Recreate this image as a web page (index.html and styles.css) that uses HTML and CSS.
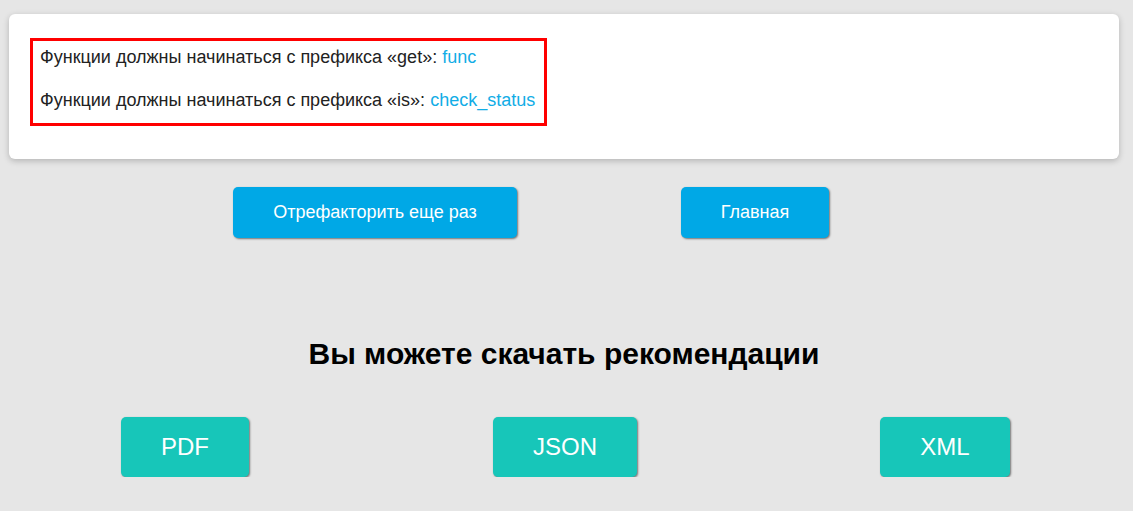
FILE: index.html
```html
<!DOCTYPE html>
<html lang="ru">
<head>
<meta charset="utf-8">
<title>Рекомендации</title>
<link rel="stylesheet" href="styles.css">
</head>
<body>
<div class="container">
  <div class="card">
    <div class="result">
      <p class="rule">Функции должны начинаться с префикса «get»: <a class="fn" href="#">func</a></p>
      <p class="rule">Функции должны начинаться с префикса «is»: <a class="fn" href="#">check_status</a></p>
    </div>
  </div>
  <div class="actions">
    <a class="btn btn-blue act-1" href="#">Отрефакторить еще раз</a>
    <a class="btn btn-blue act-2" href="#">Главная</a>
  </div>
  <h2 class="title">Вы можете скачать рекомендации</h2>
  <div class="downloads">
    <div class="dl-col"><a class="btn btn-teal" href="#">PDF</a></div>
    <div class="dl-col"><a class="btn btn-teal" href="#">JSON</a></div>
    <div class="dl-col"><a class="btn btn-teal" href="#">XML</a></div>
  </div>
</div>
</body>
</html>
```
FILE: styles.css
```css
html, body {
  margin: 0;
  padding: 0;
}
body {
  background: #e6e6e6;
  font-family: "Liberation Sans", Arial, sans-serif;
  color: #222;
  overflow: hidden;
}
.container {
  width: 1140px;
  margin-left: -6px;
}
.card {
  margin: 14px 15px 0 15px;
  background: #fff;
  border-radius: 6px;
  box-shadow: 0 2px 6px rgba(0, 0, 0, 0.22);
  padding: 24px 21px 33px 21px;
}
.result {
  display: inline-block;
  border: 3px solid #ff0000;
  padding: 6px 9px 13px 7px;
}
.rule {
  margin: 0;
  font-size: 18px;
  line-height: 20px;
}
.rule + .rule {
  margin-top: 23px;
}
.fn {
  color: #12ade6;
  text-decoration: none;
}
.actions {
  display: grid;
  grid-template-columns: repeat(6, 190px);
  margin-top: 28px;
  padding-left: 1px;
}
.act-1 {
  grid-column: 2 / 4;
  justify-self: center;
}
.act-2 {
  grid-column: 4 / 6;
  justify-self: center;
}
.btn {
  display: inline-flex;
  align-items: center;
  justify-content: center;
  color: #fff;
  text-decoration: none;
  border-radius: 5px;
  box-shadow: 1px 1px 2px rgba(0, 0, 0, 0.5);
  padding: 0 40px;
}
.btn-blue {
  background: #00a8e6;
  height: 51px;
  font-size: 18px;
}
.btn-teal {
  background: #17c6b9;
  height: 60px;
  font-size: 24px;
}
.title {
  text-align: center;
  font-size: 30px;
  font-weight: bold;
  color: #000;
  margin: 99px 0 0 0;
  line-height: 34px;
}
.downloads {
  display: grid;
  grid-template-columns: repeat(3, 380px);
  margin-top: 46px;
  padding-left: 1px;
}
.dl-col {
  display: flex;
  justify-content: center;
}
```
